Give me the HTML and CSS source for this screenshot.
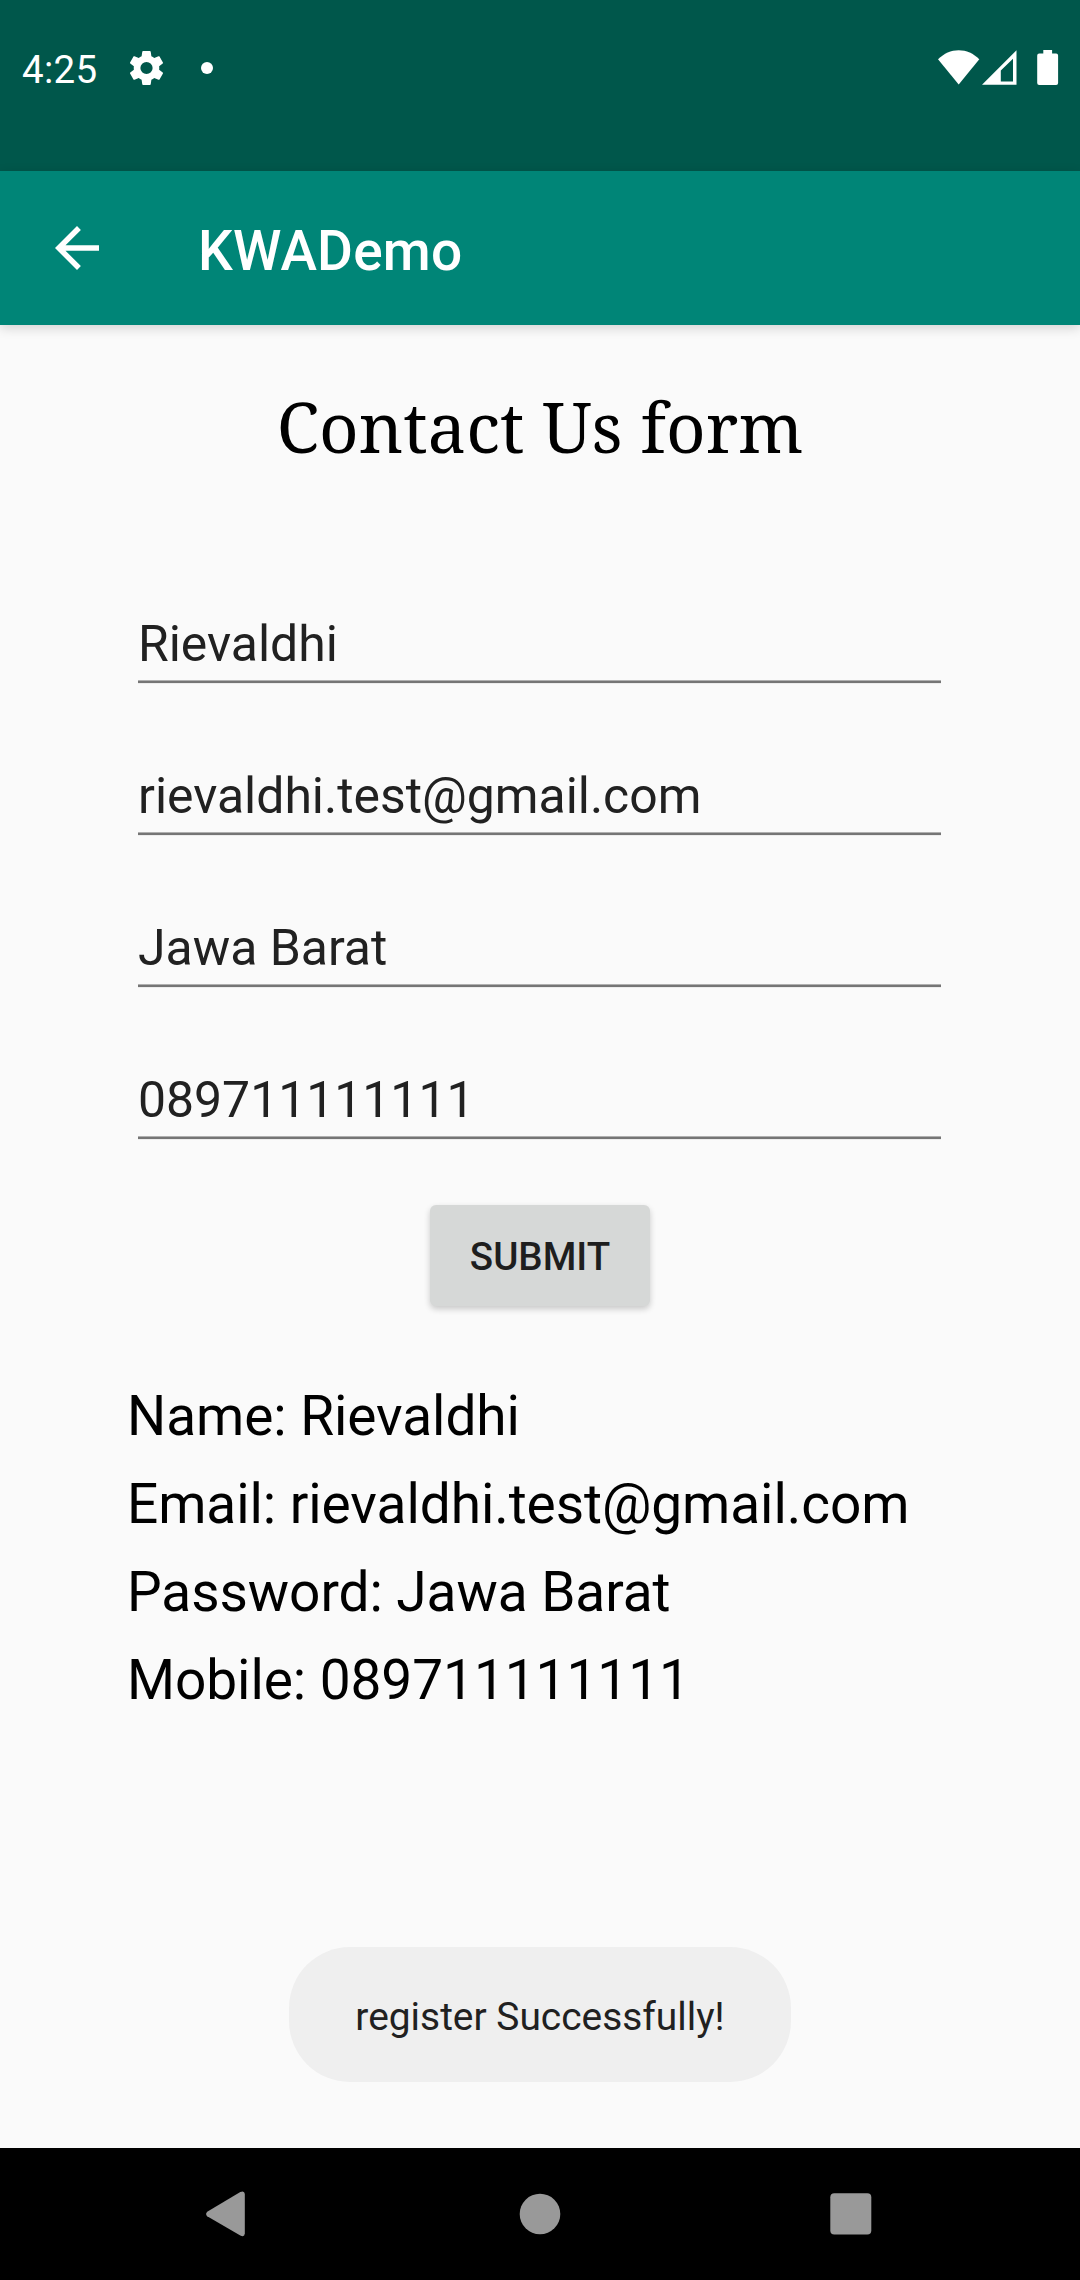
FILE: index.html
```html
<!DOCTYPE html>
<html lang="en">
<head>
<meta charset="utf-8">
<title>KWADemo</title>
<link rel="stylesheet" href="styles.css">
</head>
<body>
<div class="screen">
  <div class="status-bar">
    <span class="clock">4:25</span>
    <svg class="gear" viewBox="2.3 2 19.4 20" width="33" height="34"><path fill="#fff" fill-rule="evenodd" d="M19.43 12.98c.04-.32.07-.64.07-.98s-.03-.66-.07-.98l2.11-1.65c.19-.15.24-.42.12-.64l-2-3.46c-.12-.22-.39-.3-.61-.22l-2.49 1c-.52-.4-1.08-.73-1.69-.98l-.38-2.65C14.46 2.18 14.25 2 14 2h-4c-.25 0-.46.18-.49.42l-.38 2.65c-.61.25-1.17.59-1.69.98l-2.49-1c-.23-.09-.49 0-.61.22l-2 3.46c-.13.22-.07.49.12.64l2.11 1.65c-.04.32-.07.65-.07.98s.03.66.07.98l-2.11 1.65c-.19.15-.24.42-.12.64l2 3.46c.12.22.39.3.61.22l2.49-1c.52.4 1.08.73 1.69.98l.38 2.65c.03.24.24.42.49.42h4c.25 0 .46-.18.49-.42l.38-2.65c.61-.25 1.17-.59 1.69-.98l2.49 1c.23.09.49 0 .61-.22l2-3.46c.12-.22.07-.49-.12-.64l-2.11-1.65zM12 15.6a3.6 3.6 0 1 1 0-7.2 3.6 3.6 0 0 1 0 7.2z"/></svg>
    <span class="dot"></span>
    <div class="signals">
      <svg width="42" height="35" viewBox="0 0 42 35"><path fill="#fff" d="M0 9.300C6 3.500 13 .3 20.700 .3S35.500 3.500 41.300 9.300L20.700 34.500z"/></svg>
      <svg class="cell" width="35" height="35" viewBox="0 0 35 35"><path fill="#fff" fill-rule="evenodd" d="M0 34.700L34.500 .3V34.700zM18.800 20.500V31.500H31V8.800z"/></svg>
      <svg class="battery" width="22" height="36" viewBox="0 0 22 36"><path fill="#fff" d="M6.300 0h8.800v3.500h4a2 2 0 0 1 2 2V33a2 2 0 0 1-2 2H2.200a2 2 0 0 1-2-2V5.500a2 2 0 0 1 2-2h4.100z"/></svg>
    </div>
  </div>
  <header class="toolbar">
    <svg width="66" height="66" viewBox="0 0 24 24"><path fill="#fff" d="M20 11H7.830l5.590-5.590L12 4l-8 8 8 8 1.410-1.410L7.830 13H20z"/></svg>
    <h1 class="app-title">KWADemo</h1>
  </header>
  <main class="content">
    <h2 class="form-title">Contact Us form</h2>
    <form class="form">
      <input class="field" type="text" value="Rievaldhi">
      <input class="field" type="text" value="rievaldhi.test@gmail.com">
      <input class="field" type="text" value="Jawa Barat">
      <input class="field" type="text" value="089711111111">
      <button class="submit" type="button">SUBMIT</button>
    </form>
    <div class="summary">
      <p>Name: Rievaldhi</p>
      <p>Email: rievaldhi.test@gmail.com</p>
      <p>Password: Jawa Barat</p>
      <p>Mobile: 089711111111</p>
    </div>
    <div class="toast">register Successfully!</div>
  </main>
  <nav class="nav-bar">
    <svg width="40" height="46" viewBox="0 0 40 46"><path fill="#999" d="M1.200 20.700L34.300 1Q38.500-.8 38.800 3V42.500Q38.500 46.500 34.300 44.500L1.200 25.300Q-1 23 1.200 20.700z"/></svg>
    <svg class="home" width="42" height="42" viewBox="0 0 42 42"><circle cx="21" cy="21" r="20.300" fill="#999"/></svg>
    <svg width="42" height="42" viewBox="0 0 42 42"><rect x=".3" y=".3" width="41" height="41.300" rx="4" fill="#999"/></svg>
  </nav>
</div>
</body>
</html>
```
FILE: styles.css
```css
* { box-sizing: border-box; }
body { margin: 0; font-family: Roboto, "Noto Sans", sans-serif; }
h1, h2, p { margin: 0; font-weight: 400; }
svg { display: block; flex: none; }

.screen {
  display: flex;
  flex-direction: column;
  width: 1080px;
  height: 2280px;
  background: #fafafa;
  overflow: hidden;
}

.status-bar {
  display: flex;
  align-items: center;
  flex: none;
  height: 171px;
  padding: 0 21px 36px 22px;
  background: #00574b;
}
.clock { width: 108px; padding-top: 4px; font-size: 38.5px; line-height: 48px; letter-spacing: .3px; color: #fff; }
.dot { width: 12px; height: 12px; margin-left: 38px; border-radius: 50%; background: #fff; }
.signals { display: flex; align-items: center; margin-left: auto; }
.cell { margin-left: 2px; }
.battery { margin-left: 20px; }

.toolbar {
  display: flex;
  align-items: center;
  flex: none;
  gap: 88px;
  height: 154px;
  padding-left: 44px;
  background: #008577;
  box-shadow: 0 3px 11px rgba(0, 0, 0, .16);
}
.app-title { padding-top: 6px; font-size: 55px; line-height: 64px; font-weight: 500; letter-spacing: .2px; color: #fff; }

.content {
  display: flex;
  flex-direction: column;
  align-items: center;
  flex: 1;
}
.form-title {
  margin-top: 54px;
  font-family: "Noto Serif", "DejaVu Serif", serif;
  font-size: 68.9px;
  line-height: 94px;
  color: #000;
}
.form {
  display: flex;
  flex-direction: column;
  align-items: center;
  margin-top: 147px;
}
.field {
  width: 803px;
  height: 64px;
  margin: 0 1px 88px 0;
  padding: 0 0 16px;
  border: 0;
  outline: 0;
  background: linear-gradient(#b0b0b0 1px, #757575 1px 3px, #ececec 3px) bottom / 100% 4px no-repeat;
  font: 400 49.9px/48px Roboto, "Noto Sans", sans-serif;
  color: #212121;
}
.submit {
  width: 220px;
  height: 101px;
  margin-top: -23px;
  padding: 3px 0 0;
  border: 0;
  border-radius: 6px;
  background: #d6d8d7;
  box-shadow: 0 3px 6px rgba(0, 0, 0, .2);
  font: 500 38.5px/48px Roboto, "Noto Sans", sans-serif;
  color: #1e1e1e;
}
.summary {
  width: 826px;
  margin-top: 66px;
  font-size: 55px;
  line-height: 88px;
  letter-spacing: -.06px;
  color: #000;
}
.toast {
  display: flex;
  justify-content: center;
  width: 502px;
  height: 135px;
  margin: auto 0 66px;
  padding-top: 46px;
  border-radius: 61px;
  background: #efefef;
  font-size: 38.9px;
  line-height: 48px;
  color: #212121;
}

.nav-bar {
  display: flex;
  align-items: center;
  justify-content: space-between;
  flex: none;
  height: 132px;
  padding: 0 208px 0 206px;
  background: #000;
}
.home { margin-left: 4px; }
```
